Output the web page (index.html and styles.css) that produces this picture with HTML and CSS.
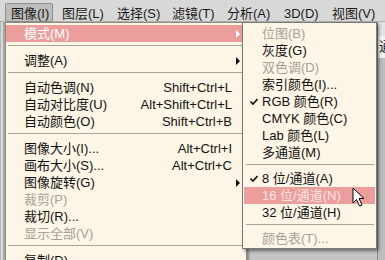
FILE: index.html
```html
<!DOCTYPE html>
<html lang="zh-CN">
<head>
    <meta charset="UTF-8">
    <title>图像 - 模式</title>
    <link rel="stylesheet" href="styles.css">
</head>
<body>
    <div class="window">
        <!-- barra de menú -->
        <div class="menubar">
            <span class="menubar-item pressed">图像(I)</span>
            <span class="menubar-item">图层(L)</span>
            <span class="menubar-item">选择(S)</span>
            <span class="menubar-item">滤镜(T)</span>
            <span class="menubar-item">分析(A)</span>
            <span class="menubar-item">3D(D)</span>
            <span class="menubar-item">视图(V)</span>
        </div>

        <div class="workspace">
            <div class="left-strip"></div>
            <div class="panel">
                <div class="panel-top"></div>
                <div class="panel-tab">通道</div>
            </div>
        </div>

        <!-- menú 图像 -->
        <div class="menu main-menu">
            <div class="item active"><span class="label">模式(M)</span><span class="arrow"></span></div>
            <div class="sep"></div>
            <div class="item"><span class="label">调整(A)</span><span class="arrow"></span></div>
            <div class="sep"></div>
            <div class="item"><span class="label">自动色调(N)</span><span class="key">Shift+Ctrl+L</span><span class="arrow none"></span></div>
            <div class="item"><span class="label">自动对比度(U)</span><span class="key">Alt+Shift+Ctrl+L</span><span class="arrow none"></span></div>
            <div class="item"><span class="label">自动颜色(O)</span><span class="key">Shift+Ctrl+B</span><span class="arrow none"></span></div>
            <div class="sep"></div>
            <div class="item"><span class="label">图像大小(I)...</span><span class="key">Alt+Ctrl+I</span><span class="arrow none"></span></div>
            <div class="item"><span class="label">画布大小(S)...</span><span class="key">Alt+Ctrl+C</span><span class="arrow none"></span></div>
            <div class="item"><span class="label">图像旋转(G)</span><span class="arrow"></span></div>
            <div class="item disabled"><span class="label">裁剪(P)</span></div>
            <div class="item"><span class="label">裁切(R)...</span></div>
            <div class="item disabled"><span class="label">显示全部(V)</span></div>
            <div class="sep"></div>
            <div class="item"><span class="label">复制(D)</span></div>
        </div>

        <!-- submenú 模式 -->
        <div class="menu sub-menu">
            <div class="item disabled"><span class="check"></span><span class="label">位图(B)</span></div>
            <div class="item"><span class="check"></span><span class="label">灰度(G)</span></div>
            <div class="item disabled"><span class="check"></span><span class="label">双色调(D)</span></div>
            <div class="item"><span class="check"></span><span class="label">索引颜色(I)...</span></div>
            <div class="item"><span class="check"><svg width="8" height="8" viewBox="0 0 8 8"><path d="M0.5 3.5 L3 6 L7.5 1" fill="none" stroke="#111" stroke-width="1.6"/></svg></span><span class="label">RGB 颜色(R)</span></div>
            <div class="item"><span class="check"></span><span class="label">CMYK 颜色(C)</span></div>
            <div class="item"><span class="check"></span><span class="label">Lab 颜色(L)</span></div>
            <div class="item"><span class="check"></span><span class="label">多通道(M)</span></div>
            <div class="sep"></div>
            <div class="item"><span class="check"><svg width="8" height="8" viewBox="0 0 8 8"><path d="M0.5 3.5 L3 6 L7.5 1" fill="none" stroke="#111" stroke-width="1.6"/></svg></span><span class="label">8 位/通道(A)</span></div>
            <div class="item active"><span class="check"></span><span class="label">16 位/通道(N)</span></div>
            <div class="item"><span class="check"></span><span class="label">32 位/通道(H)</span></div>
            <div class="sep"></div>
            <div class="item disabled"><span class="check"></span><span class="label">颜色表(T)...</span></div>
        </div>

        <svg class="cursor" width="14" height="21" viewBox="0 0 14 21">
            <path d="M1 1 L1 16 L4.5 12.5 L7.5 19 L10 18 L7 11.5 L12 11.5 Z" fill="#fff" stroke="#000" stroke-width="1" stroke-linejoin="miter"/>
        </svg>
    </div>
</body>
</html>
```

FILE: styles.css
```css
/* Menú estilo Photoshop */
body {
    margin: 0;
    font-family: "Liberation Sans", "Noto Sans CJK SC", sans-serif;
    font-size: 13px;
    color: #111;
}
.window {
    position: relative;
    width: 385px;
    height: 260px;
    overflow: hidden;
    background: #c4c4c4;
}
.menubar {
    display: flex;
    height: 22px;
    padding-left: 5px;
    background: #d8d8d8;
    border-bottom: 1px solid #b0b0b0;
    box-sizing: border-box;
}
.menubar-item {
    box-sizing: border-box;
    height: 19px;
    margin-top: 3px;
    padding: 3px 0 0 6px;
    line-height: 16px;
    width: 55px;
    white-space: nowrap;
    color: #1a1a1a;
}
.menubar-item.pressed {
    width: 48px;
    margin-right: 3px;
    background: #bdbdbd;
    border: 1px solid #8e8e8e;
    border-radius: 2px;
    padding: 2px 0 0 5px;
}
.menubar-item:nth-child(5) {
    width: 57px;
}
.menubar-item:nth-child(6) {
    width: 48px;
}
.workspace {
    display: flex;
    justify-content: space-between;
    height: 238px;
}
.left-strip {
    width: 5px;
    background: linear-gradient(to right, #b8b8b8 0, #b8b8b8 1px, #d6d6d6 1px, #d6d6d6 3px, #a8a8a8 3px);
}
.panel {
    width: 7px;
    background: #bdbdbd;
    border-left: 1px solid #8a8a8a;
}
.panel-top {
    height: 14px;
    background: #e2e2e2;
}
.panel-tab {
    padding-left: 1px;
    height: 22px;
    line-height: 22px;
    background: #f2f2f2;
    white-space: nowrap;
    overflow: hidden;
    font-size: 13px;
}
.menu {
    position: absolute;
    top: 22px;
    background: #fdf5e6;
    border: 1px solid #8e8a82;
    box-sizing: border-box;
}
.main-menu {
    left: 5px;
    width: 242px;
    height: 250px;
    padding: 2px 0 0 0;
    box-shadow: 2px 2px 2px rgba(0, 0, 0, 0.3);
}
.sub-menu {
    left: 242px;
    width: 135px;
    padding: 2px 1px 1px 1px;
    border-color: #7c7a76;
    box-shadow: 2px 2px 3px rgba(0, 0, 0, 0.45);
}
.item {
    display: flex;
    align-items: center;
    height: 17px;
    line-height: 17px;
    white-space: nowrap;
}
.main-menu .item {
    padding-left: 18px;
}
.item .label {
    flex: 1;
}
.item .key {
    text-align: right;
}
.item .arrow {
    width: 14px;
    height: 17px;
    position: relative;
}
.item .arrow::after {
    content: "";
    position: absolute;
    left: 4px;
    top: 5px;
    border-left: 4px solid #111;
    border-top: 4px solid transparent;
    border-bottom: 4px solid transparent;
}
.item .arrow.none::after {
    display: none;
}
.item.active {
    background: #eb9e9c;
    color: #fff;
}
.item.active .arrow::after {
    border-left-color: #fff;
}
.item.disabled {
    color: #a6a198;
}
.sub-menu .item.active {
    color: #fbe4e2;
}
.check {
    width: 18px;
    display: flex;
    justify-content: center;
    padding-left: 1px;
    box-sizing: border-box;
}
.check svg {
    display: block;
}
.sep {
    height: 9px;
    position: relative;
}
.sep::after {
    content: "";
    position: absolute;
    left: 2px;
    right: 1px;
    top: 3px;
    border-top: 1px solid #a8a49c;
}
.main-menu .sep {
    height: 10px;
}
.cursor {
    position: absolute;
    left: 352px;
    top: 187px;
}
```
